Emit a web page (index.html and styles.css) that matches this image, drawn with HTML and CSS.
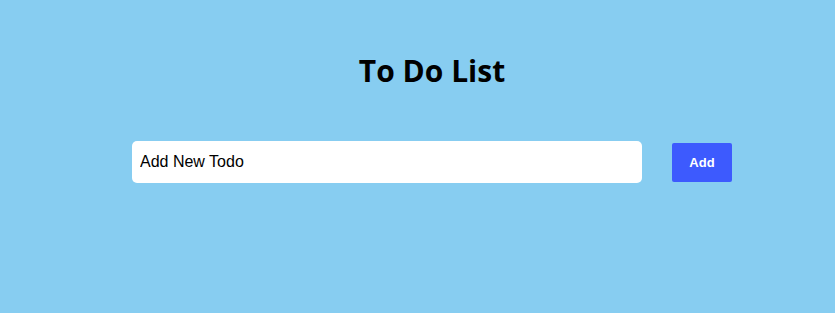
FILE: index.html
```html
<!DOCTYPE html>
<html lang="en">
<head>
    <meta charset="UTF-8">
    <meta name="viewport" content="width=device-width, initial-scale=1.0">
    <title>To Do List</title>
    <link rel="stylesheet" href="styles.css">
</head>
<body>
    <div class="app">
        <h1 class="app-title">To Do List</h1>
        <form class="todo-form" onsubmit="return false;">
            <input class="todo-input" type="text" value="Add New Todo">
            <button class="todo-add" type="submit">Add</button>
        </form>
    </div>
</body>
</html>
```

FILE: styles.css
```css
html, body {
    margin: 0;
    padding: 0;
    width: 100%;
    height: 100%;
    background: #87cdf1;
}

.app {
    width: 600px;
    margin: 0 auto;
    padding: 47px 0 0 29px;
    display: flex;
    flex-direction: column;
    align-items: center;
}

.app-title {
    margin: 0;
    font-family: "Open Sans", "DejaVu Sans", sans-serif;
    font-weight: 700;
    font-size: 30px;
    line-height: 48px;
    color: #000;
}

.todo-form {
    margin-top: 46px;
    width: 100%;
    display: flex;
    align-items: center;
    gap: 30px;
}

.todo-input {
    box-sizing: border-box;
    width: 510px;
    height: 42px;
    padding: 0 8px;
    border: none;
    border-radius: 5px;
    background: #fff;
    font-family: "Liberation Sans", Arial, sans-serif;
    font-size: 16px;
    color: #000;
    outline: none;
}

.todo-add {
    box-sizing: border-box;
    width: 60px;
    height: 39px;
    border: none;
    border-radius: 2px;
    background: #3d5afe;
    color: #fff;
    font-family: "Liberation Sans", Arial, sans-serif;
    font-weight: 700;
    font-size: 13px;
    cursor: pointer;
}
```
